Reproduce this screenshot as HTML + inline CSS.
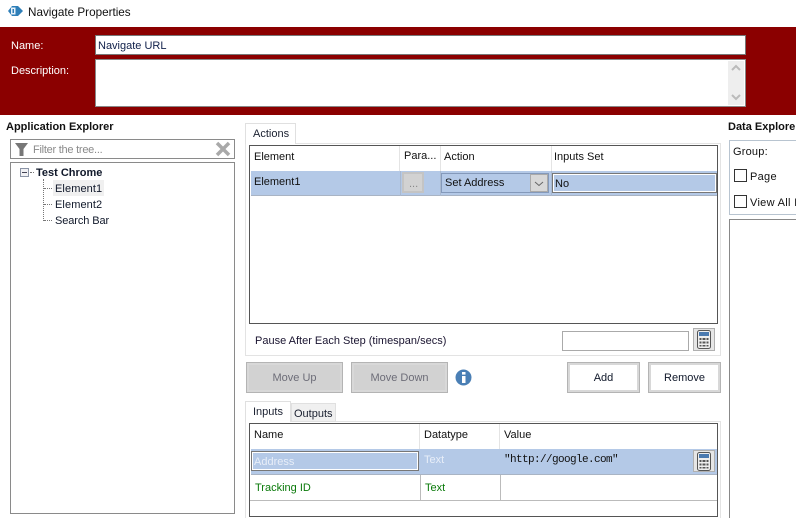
<!DOCTYPE html>
<html><head><meta charset="utf-8"><style>
html,body{margin:0;padding:0;background:#fff}
#p{position:relative;width:796px;height:518px;overflow:hidden;background:#fff;font:11px "Liberation Sans",sans-serif;color:#111}
#p div,#p svg{position:absolute;box-sizing:border-box}
.t{white-space:nowrap;line-height:16px}
.b{font-weight:bold;font-size:11px}
.btn{background:#fff;border:3px solid #d8d8d8;outline:1px solid #b4b4b4;outline-offset:-1px;text-align:center;line-height:25px}
.dis{background:#d2d2d2;color:#6d6d78}
</style></head><body><div id="p">
<svg style="left:8px;top:4px" width="16" height="14" viewBox="0 0 16 14"><path d="M0 7L4 2h6l5 5-5 5H4z" fill="#2f7fb8"/><rect x="3" y="3.500" width="4.500" height="7" fill="#e8f2fa"/><rect x="4.500" y="5" width="1.500" height="4" fill="#2f7fb8"/></svg>
<div class="t" style="left:28px;top:5px;font-size:11.700px">Navigate Properties</div>
<div style="left:0;top:27px;width:796px;height:88px;background:#8b0000"></div>
<div class="t" style="left:11px;top:38px;color:#fff">Name:</div>
<div class="t" style="left:11px;top:63px;color:#fff">Description:</div>
<div style="left:95px;top:35px;width:651px;height:20px;background:#fff;border:1px solid #777"></div>
<div class="t" style="left:98px;top:38px;color:#10204a">Navigate URL</div>
<div style="left:95px;top:59px;width:651px;height:48px;background:#fff;border:1px solid #888"></div>
<div style="left:728px;top:61px;width:16px;height:44px;background:#eee"></div>
<svg style="left:728px;top:61px" width="16" height="44"><path d="M4 9L8 5l4 4M4 34l4 4 4-4" fill="none" stroke="#bbb" stroke-width="2"/></svg>

<div class="t b" style="left:6px;top:119px;color:#111">Application Explorer</div>
<div style="left:10px;top:139px;width:225px;height:20px;border:1px solid #8a8a8a"></div>
<svg style="left:14px;top:142px" width="16" height="15"><path d="M1 1h13L9.500 7v7h-4V7z" fill="#777"/></svg>
<div class="t" style="left:33px;top:142px;color:#8a8a8a;letter-spacing:-.25px">Filter the tree...</div>
<svg style="left:215px;top:141px" width="17" height="16"><path d="M2 2l12 12M14 2L2 14" stroke="#a9a9a9" stroke-width="3.500"/></svg>
<div style="left:10px;top:162px;width:225px;height:352px;border:1px solid #8a8a8a"></div>
<div style="left:20px;top:168px;width:9px;height:9px;border:1px solid #8a93a5;background:#f1f1f4"></div>
<div style="left:22px;top:172px;width:5px;height:1px;background:#445"></div>
<div style="left:30px;top:172px;width:4px;border-top:1px dotted #777"></div>
<div style="left:43px;top:179px;height:42px;border-left:1px dotted #777"></div>
<div style="left:44px;top:188px;width:8px;border-top:1px dotted #777"></div>
<div style="left:44px;top:204px;width:8px;border-top:1px dotted #777"></div>
<div style="left:44px;top:220px;width:8px;border-top:1px dotted #777"></div>
<div class="t b" style="left:36px;top:165px;color:#10182a">Test Chrome</div>
<div style="left:53px;top:180px;width:51px;height:16px;background:#f0f0f0"></div>
<div class="t" style="left:55px;top:181px;color:#10182a;letter-spacing:.1px">Element1</div>
<div class="t" style="left:55px;top:197px;color:#10182a;letter-spacing:.1px">Element2</div>
<div class="t" style="left:55px;top:213px;color:#10182a;letter-spacing:-.1px">Search Bar</div>

<div style="left:245px;top:143px;width:476px;height:213px;border:1px solid #e3e3e3;background:#fff"></div>
<div style="left:245px;top:123px;width:51px;height:21px;border:1px solid #e0e0e0;border-bottom:0;background:#fff"></div>
<div class="t" style="left:253px;top:126px;color:#1a2030">Actions</div>
<div style="left:249px;top:145px;width:469px;height:179px;border:1px solid #555;background:#fff"></div>
<div style="left:399px;top:146px;width:1px;height:25px;background:#e4e4e4"></div>
<div style="left:440px;top:146px;width:1px;height:25px;background:#e4e4e4"></div>
<div style="left:551px;top:146px;width:1px;height:25px;background:#e4e4e4"></div>
<div class="t" style="left:254px;top:149px">Element</div>
<div class="t" style="left:404px;top:148px">Para...</div>
<div class="t" style="left:444px;top:149px">Action</div>
<div class="t" style="left:554px;top:149px">Inputs Set</div>
<div style="left:251px;top:171px;width:466px;height:25px;background:#b4c9e7;border-bottom:1px solid #a9b4c4"></div>
<div style="left:400px;top:171px;width:1px;height:25px;background:#a9b9d0"></div>
<div style="left:440px;top:171px;width:1px;height:25px;background:#a9b9d0"></div>
<div style="left:551px;top:171px;width:1px;height:25px;background:#a9b9d0"></div>
<div class="t" style="left:254px;top:174px">Element1</div>
<div style="left:402px;top:172px;width:22px;height:21px;background:#d2d2d2;border:2px solid #c4c4c4"></div>
<div class="t" style="left:409px;top:176px;color:#888;font-size:11px">...</div>
<div style="left:441px;top:173px;width:108px;height:20px;background:#b4c9e7;border:1px solid #8499ba"></div>
<div class="t" style="left:445px;top:175px">Set Address</div>
<div style="left:530px;top:174px;width:18px;height:18px;background:#d8d8d8;border:1px solid #aaa"></div>
<svg style="left:530px;top:174px" width="18" height="18"><path d="M5 8l4 3.500L13 8" fill="none" stroke="#666"/></svg>
<div style="left:552px;top:173px;width:165px;height:20px;border:1px solid #777;outline:1px solid #fff;outline-offset:-2px;background:#b4c9e7"></div>
<div class="t" style="left:555px;top:176px">No</div>
<div class="t" style="left:255px;top:333px;color:#1a1430">Pause After Each Step (timespan/secs)</div>
<div style="left:562px;top:331px;width:127px;height:20px;border:1px solid #aaa"></div>
<div style="left:693px;top:328px;width:22px;height:23px;background:#e6e6e6;border:1px solid #b0b0b0"></div>
<svg style="left:697px;top:330px" width="14" height="19" viewBox="0 0 14 19"><rect x=".5" y=".5" width="13" height="18" rx="2" fill="#eee" stroke="#555"/><rect x="2" y="2" width="10" height="4" fill="#4a7ab0"/><path d="M2.500 8h9v2h-9zM2.500 11.500h9v2h-9zM2.500 15h9v1.500h-9z" fill="#555"/><path d="M5 8v9M9 8v9" stroke="#eee"/></svg>

<div class="btn dis" style="left:246px;top:362px;width:97px;height:31px;line-height:27px">Move Up</div>
<div class="btn dis" style="left:351px;top:362px;width:97px;height:31px;line-height:27px">Move Down</div>
<svg style="left:455px;top:369px" width="17" height="17"><circle cx="8.500" cy="8.500" r="8" fill="#4a7fb5"/><rect x="7" y="7" width="3.500" height="7" fill="#fff"/><rect x="7" y="3" width="3.500" height="2.600" fill="#fff"/></svg>
<div class="btn" style="left:567px;top:362px;width:73px;height:31px;line-height:27px;color:#10182a">Add</div>
<div class="btn" style="left:648px;top:362px;width:73px;height:31px;line-height:27px;color:#10182a">Remove</div>

<div style="left:245px;top:421px;width:476px;height:97px;border:1px solid #e3e3e3;border-bottom:0;background:#fff"></div>
<div style="left:291px;top:403px;width:45px;height:19px;border:1px solid #e0e0e0;background:#f0f0f0"></div>
<div style="left:245px;top:401px;width:46px;height:21px;border:1px solid #e0e0e0;border-bottom:0;background:#fff"></div>
<div class="t" style="left:253px;top:404px;color:#1a2030">Inputs</div>
<div class="t" style="left:294px;top:406px;color:#1a2030">Outputs</div>
<div style="left:249px;top:423px;width:469px;height:94px;border:1px solid #555;background:#fff"></div>
<div style="left:419px;top:424px;width:1px;height:25px;background:#e4e4e4"></div>
<div style="left:499px;top:424px;width:1px;height:25px;background:#e4e4e4"></div>
<div class="t" style="left:254px;top:427px">Name</div>
<div class="t" style="left:424px;top:427px">Datatype</div>
<div class="t" style="left:504px;top:427px">Value</div>
<div style="left:251px;top:449px;width:466px;height:26px;background:#b4c9e7;border-bottom:1px solid #a9b4c4"></div>
<div style="left:251px;top:451px;width:168px;height:20px;border:1px solid #777;outline:1px solid #fff;outline-offset:-2px"></div>
<div class="t" style="left:254px;top:454px;color:#e8eef8">Address</div>
<div class="t" style="left:424px;top:452px;color:#e8eef8">Text</div>
<div class="t" style="left:504px;top:452px;font:11px/16px 'Liberation Mono',monospace;letter-spacing:-.6px;color:#111">"http://google.com"</div>
<div style="left:693px;top:450px;width:22px;height:22px;background:#e6e6e6;border:1px solid #b0b0b0"></div>
<svg style="left:697px;top:452px" width="14" height="19" viewBox="0 0 14 19"><rect x=".5" y=".5" width="13" height="18" rx="2" fill="#eee" stroke="#555"/><rect x="2" y="2" width="10" height="4" fill="#4a7ab0"/><path d="M2.500 8h9v2h-9zM2.500 11.500h9v2h-9zM2.500 15h9v1.500h-9z" fill="#555"/><path d="M5 8v9M9 8v9" stroke="#eee"/></svg>
<div class="t" style="left:255px;top:480px;color:#0a7a0a">Tracking ID</div>
<div class="t" style="left:425px;top:480px;color:#0a7a0a">Text</div>
<div style="left:420px;top:475px;width:1px;height:26px;background:#bbb"></div>
<div style="left:500px;top:475px;width:1px;height:26px;background:#bbb"></div>
<div style="left:250px;top:500px;width:467px;height:1px;background:#bbb"></div>

<div class="t b" style="left:728px;top:119px;color:#111">Data Explorer</div>
<div style="left:729px;top:140px;width:80px;height:75px;border:1px solid #b8c4d0"></div>
<div class="t" style="left:733px;top:144px;letter-spacing:.2px">Group:</div>
<div style="left:734px;top:169px;width:13px;height:13px;border:1px solid #333;background:#fff"></div>
<div class="t" style="left:750px;top:169px;letter-spacing:.3px">Page</div>
<div style="left:734px;top:195px;width:13px;height:13px;border:1px solid #333;background:#fff"></div>
<div class="t" style="left:750px;top:195px;letter-spacing:.3px">View All Items</div>
<div style="left:729px;top:219px;width:80px;height:310px;border:1px solid #888"></div>
</div></body></html>
